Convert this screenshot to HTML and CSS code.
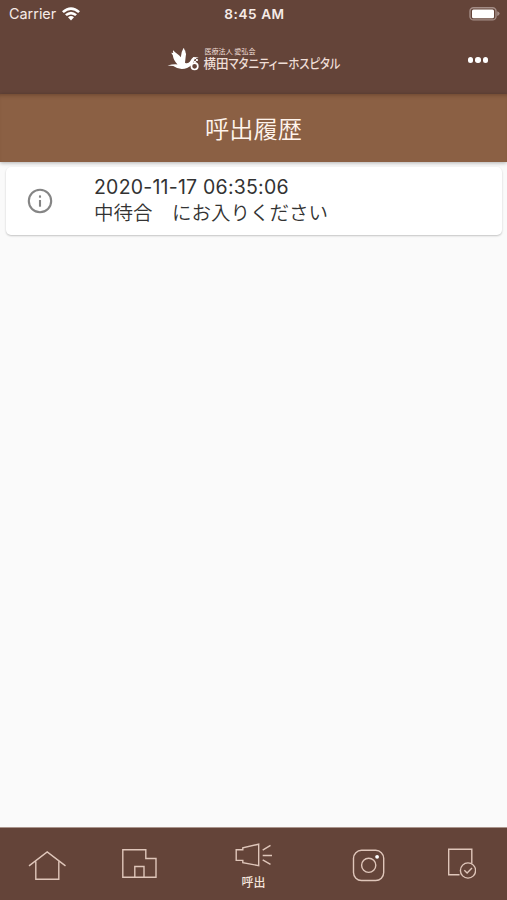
FILE: index.html
```html
<!DOCTYPE html>
<html lang="ja">
<head>
    <meta charset="UTF-8">
    <meta name="viewport" content="width=device-width, initial-scale=1.0">
    <title>呼出履歴</title>
    <link rel="stylesheet" href="styles.css">
</head>
<body>

<div class="app">
    <div class="status-bar">
        <div class="carrier">
            <span>Carrier</span>
            <svg class="wifi" width="18" height="14" viewBox="0 0 18 14">
                <path d="M0 4.2Q9-3.8 18 4.2L16.2 6.1Q9-.1 1.8 6.1Z"/>
                <path d="M3 7.3Q9 2.2 15 7.3L13.2 9.1Q9 5.7 4.8 9.1Z"/>
                <path d="M6 10.3Q9 7.9 12 10.3L9 13.6Z"/>
            </svg>
        </div>
        <div class="time">8:45 AM</div>
        <div class="battery">
            <svg width="31" height="14" viewBox="0 0 31 14">
                <rect class="battery-case" x="1" y=".7" width="26" height="12.2" rx="3.5"/>
                <rect class="battery-level" x="3" y="2.4" width="22" height="8.8" rx="1.5"/>
                <path class="battery-tip" d="M28.2 4.2Q30.6 5 30.6 6.6T28.2 9Z"/>
            </svg>
        </div>
    </div>

    <header class="header">
        <svg class="logo" width="174" height="26" viewBox="0 0 174 26">
            <!-- stork -->
            <path d="M.5 18.6Q6 17 10.5 17.4Q6.5 13.5 5.8 8.3L4.2 5.7L6.2 6Q5.6 3.6 6.2 3.2Q8 5.5 10.4 7Q12.5 8.5 13.8 10.2Q14.1 5 16.5 1Q17.5 1.3 17.5 3Q18.7 3.4 18.4 5Q19.5 6.5 18.7 9.5Q18.3 13.4 18 15.7Q20.7 17.2 23 14.6Q24.6 11.3 26.5 10L31.7 10.4L27.8 11.8Q26.6 16 24.3 18.3Q20.5 22 14.8 22Q10.2 22 6.3 19.1Z"/>
            <circle class="bundle" cx="27.6" cy="19.3" r="3.2"/>
            <path class="bundle-tie" d="M25.7 13.2L29.4 15.8M30.8 12.2L27 15.8M28 11L30.8 14"/>
            <text class="logo-sub" x="37.5" y="6.8" textLength="51" lengthAdjust="spacingAndGlyphs">医療法人 愛弘会</text>
            <text class="logo-kanji" x="36.5" y="20.8" textLength="25" lengthAdjust="spacingAndGlyphs">横田</text>
            <text class="logo-kana" x="61.5" y="20.6" textLength="112" lengthAdjust="spacingAndGlyphs">マタニティーホスピタル</text>
        </svg>
        <div class="more">
            <span></span><span></span><span></span>
        </div>
    </header>

    <h1 class="title">呼出履歴</h1>

    <main class="content">
        <div class="card">
            <svg class="info" width="26" height="26" viewBox="0 0 26 26">
                <circle cx="13" cy="13" r="11.2"/>
                <path d="M13 12V18.7"/>
                <path d="M13 7.4V9.7"/>
            </svg>
            <div class="message">
                <div class="date">2020-11-17 06:35:06</div>
                <div class="text">中待合　にお入りください</div>
            </div>
        </div>
    </main>

    <nav class="tabs">
        <a class="tab">
            <svg width="38" height="32" viewBox="0 0 38 32">
                <path d="M1 16.9L19.2 2.9L37.5 16.9M7.8 12.5V30.3H30.8V12.5"/>
            </svg>
        </a>
        <a class="tab">
            <svg width="36" height="32" viewBox="0 0 36 32">
                <path d="M.8 .8H23.8V9.5H34V28.3H.8ZM12.8 28.3V17.5H22V28.3"/>
            </svg>
        </a>
        <a class="tab active">
            <svg width="38" height="24" viewBox="0 0 38 24">
                <path d="M1.2 6.7H7.8V4.7L23.7 1.2V22.6L7.8 19.6V17.4H1.2ZM27.7 7.2L35.5 2.3M27.7 12.5H37M27.7 16.8L35.5 21.3"/>
            </svg>
            <span>呼出</span>
        </a>
        <a class="tab">
            <svg width="34" height="34" viewBox="0 0 34 34">
                <rect x="2.5" y="2.3" width="30.2" height="30.2" rx="8"/>
                <circle cx="17.7" cy="17.3" r="7.1"/>
                <circle class="dot" cx="26.1" cy="8.8" r="1.9"/>
            </svg>
        </a>
        <a class="tab">
            <svg width="30" height="34" viewBox="0 0 30 34">
                <path d="M13.5 26.7H2.7V1.2H25.8V15.5"/>
                <circle cx="22" cy="22.5" r="7.6"/>
                <path d="M18.3 22.3L21.1 25L26 20.1"/>
            </svg>
        </a>
    </nav>
</div>

</body>
</html>
```
FILE: styles.css
```css
* {
    box-sizing: border-box;
}
body {
    margin: 0;
    font-family: Inter, "Noto Sans CJK JP", sans-serif;
    background-color: #fafafa;
}
.app {
    display: flex;
    flex-direction: column;
    height: 900px;
}
.status-bar {
    display: grid;
    grid-template-columns: 1fr auto 1fr;
    align-items: center;
    height: 27px;
    padding: 0 7px 0 9px;
    background-color: #644439;
    color: #f6ebe7;
    font-size: 14px;
}
.carrier {
    display: flex;
    align-items: center;
    gap: 6px;
    font-size: 14.4px;
}
.wifi {
    fill: #fff;
}
.time {
    font-size: 13.6px;
    font-weight: 600;
    letter-spacing: 0.55px;
}
.battery {
    display: flex;
    justify-content: flex-end;
}
.battery-case {
    fill: none;
    stroke: #a48d87;
    stroke-width: 1.4;
}
.battery-level {
    fill: #fff;
}
.battery-tip {
    fill: #a48d87;
}
.header {
    display: grid;
    grid-template-columns: 1fr auto 1fr;
    align-items: center;
    height: 67px;
    padding: 0 19px 0 20px;
    background-color: #644439;
}
.logo {
    grid-column: 2;
    margin-top: -1px;
    fill: #fff;
    overflow: visible;
}
.bundle,
.bundle-tie {
    fill: none;
    stroke: #fff;
    stroke-width: 1.7;
}
.bundle-tie {
    stroke-width: 1;
}
.logo-sub,
.logo-kanji,
.logo-kana {
    font-family: "Noto Sans CJK JP", sans-serif;
    fill: #efded7;
}
.logo-sub {
    font-size: 6.6px;
}
.logo-kanji {
    font-size: 13px;
    font-weight: 500;
}
.logo-kana {
    font-size: 13px;
    font-weight: 500;
    font-feature-settings: "palt";
}
.more {
    display: flex;
    justify-content: flex-end;
    gap: 2px;
    margin-top: -1px;
}
.more span {
    width: 5.4px;
    height: 5.4px;
    border-radius: 50%;
    background-color: #fff;
}
.title {
    display: flex;
    align-items: center;
    justify-content: center;
    height: 68px;
    margin: 0;
    padding-bottom: 2px;
    background-color: #8b6044;
    color: #fff4ec;
    font-size: 24.3px;
    font-weight: 350;
    box-shadow: inset 0 4px 4px -3px rgba(60, 30, 15, 0.4), 0 1px 4px rgba(0, 0, 0, 0.3);
}
.content {
    flex: 1;
    padding: 5px 5px 0 6px;
}
.card {
    display: flex;
    align-items: center;
    height: 68px;
    padding: 0 21px;
    border-radius: 5px;
    background-color: #fff;
    box-shadow: 0 1px 2px rgba(0, 0, 0, 0.22);
}
.info {
    fill: none;
    stroke: #858585;
    stroke-width: 2.1;
}
.message {
    margin-left: 41px;
    color: #333;
}
.date {
    font-size: 19.5px;
    line-height: 25px;
    letter-spacing: 0.22px;
}
.text {
    font-size: 19.5px;
    font-weight: 350;
    line-height: 27px;
}
.tabs {
    display: grid;
    grid-template-columns: 93px 93px 1fr 93px 93px;
    height: 73px;
    border-top: 1px solid #aa958d;
    background-color: #644439;
}
.tab {
    display: flex;
    flex-direction: column;
    align-items: center;
    justify-content: center;
    color: #f5e5dc;
    font-size: 12px;
}
.tab svg {
    margin-top: 2px;
    fill: none;
    stroke: #dfc6ba;
    stroke-width: 1.4;
}
.tab .dot {
    fill: #fff;
    stroke: none;
}
.tab.active svg {
    margin-top: 6px;
}
.active span {
    margin-top: 7px;
    line-height: 18px;
    font-weight: 500;
}
```
